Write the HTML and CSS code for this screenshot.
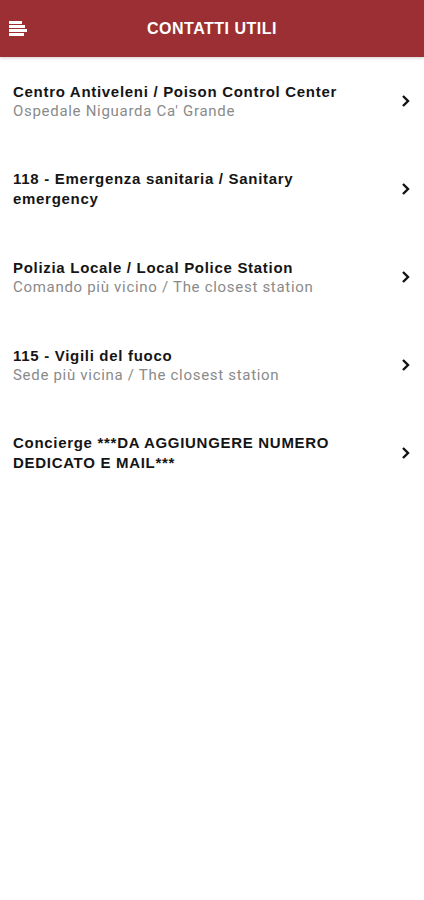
FILE: index.html
```html
<!DOCTYPE html>
<html>
<head>
    <title>Contatti utili</title>
    <link rel="stylesheet" href="styles.css">
</head>
<body>
    <header class="topbar">
        <svg class="menu-icon" width="20" height="16" viewBox="0 0 20 16">
            <rect x="0" y="0" width="13" height="3" fill="#fff"/>
            <rect x="0" y="4" width="16" height="3" fill="#fff"/>
            <rect x="0" y="8" width="18" height="3" fill="#fff"/>
            <rect x="0" y="12" width="15" height="3" fill="#fff"/>
        </svg>
        <h1 class="title">CONTATTI UTILI</h1>
    </header>

    <ul class="contacts">
        <li class="contact">
            <div class="contact-text">
                <div class="contact-name">Centro Antiveleni / Poison Control Center</div>
                <div class="contact-sub">Ospedale Niguarda Ca' Grande</div>
            </div>
            <svg class="chevron" width="10" height="14" viewBox="0 0 10 14"><path d="M2 2 L7 7 L2 12" fill="none" stroke="#111" stroke-width="2.4"/></svg>
        </li>
        <li class="contact">
            <div class="contact-text">
                <div class="contact-name">118 - Emergenza sanitaria / Sanitary emergency</div>
            </div>
            <svg class="chevron" width="10" height="14" viewBox="0 0 10 14"><path d="M2 2 L7 7 L2 12" fill="none" stroke="#111" stroke-width="2.4"/></svg>
        </li>
        <li class="contact">
            <div class="contact-text">
                <div class="contact-name">Polizia Locale / Local Police Station</div>
                <div class="contact-sub">Comando più vicino / The closest station</div>
            </div>
            <svg class="chevron" width="10" height="14" viewBox="0 0 10 14"><path d="M2 2 L7 7 L2 12" fill="none" stroke="#111" stroke-width="2.4"/></svg>
        </li>
        <li class="contact">
            <div class="contact-text">
                <div class="contact-name">115 - Vigili del fuoco</div>
                <div class="contact-sub">Sede più vicina / The closest station</div>
            </div>
            <svg class="chevron" width="10" height="14" viewBox="0 0 10 14"><path d="M2 2 L7 7 L2 12" fill="none" stroke="#111" stroke-width="2.4"/></svg>
        </li>
        <li class="contact">
            <div class="contact-text">
                <div class="contact-name">Concierge ***DA AGGIUNGERE NUMERO DEDICATO E MAIL***</div>
            </div>
            <svg class="chevron" width="10" height="14" viewBox="0 0 10 14"><path d="M2 2 L7 7 L2 12" fill="none" stroke="#111" stroke-width="2.4"/></svg>
        </li>
    </ul>
</body>
</html>
```

FILE: styles.css
```css
body {
    margin: 0;
    background-color: #fff;
    font-family: "Liberation Sans", Arial, sans-serif;
}

.topbar {
    display: flex;
    align-items: center;
    justify-content: center;
    position: relative;
    height: 57px;
    background-color: #9c2f33;
    box-shadow: 0 1px 3px rgba(0, 0, 0, 0.2);
}

.menu-icon {
    position: absolute;
    left: 9px;
    top: 21px;
}

.title {
    margin: 0;
    color: #fff;
    font-size: 16px;
    font-weight: bold;
    letter-spacing: 0.5px;
}

.contacts {
    list-style: none;
    margin: 0;
    padding: 0;
}

.contact {
    display: flex;
    align-items: center;
    height: 88px;
    padding: 0 13px;
}

.contact-text {
    flex: 1;
    padding-right: 40px;
}

.contact-name {
    color: #151515;
    font-size: 15px;
    font-weight: bold;
    letter-spacing: 0.7px;
    line-height: 20px;
}

.contact-sub {
    color: #8a8a8a;
    font-family: Roboto, sans-serif;
    font-size: 15px;
    letter-spacing: 0.7px;
    line-height: 19px;
}

.chevron {
    flex: none;
}
```
